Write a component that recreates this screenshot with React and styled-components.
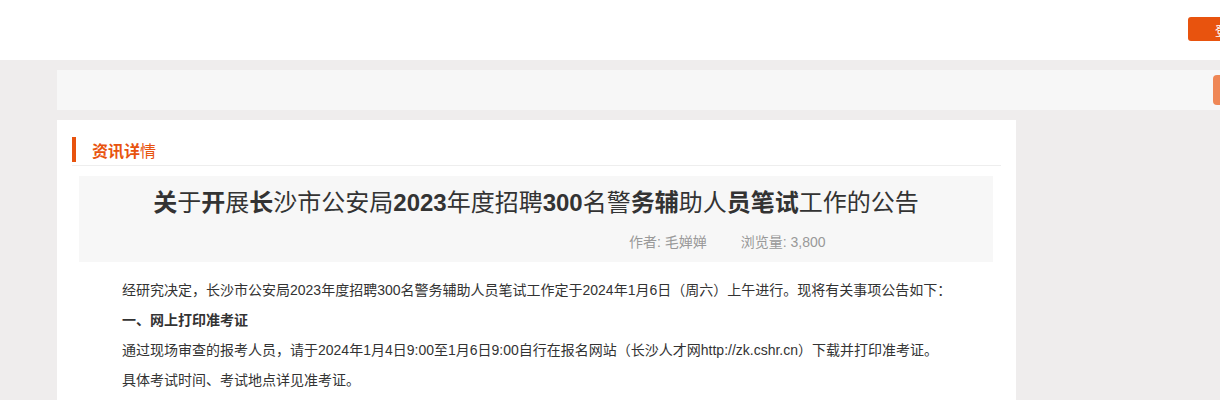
import styled, { createGlobalStyle } from 'styled-components';

const GlobalStyle = createGlobalStyle`
  html, body {
    margin: 0;
    padding: 0;
    overflow: hidden;
    background-color: #efeded;
  }
  body {
    font-family: 'Liberation Sans', 'Noto Sans CJK SC', sans-serif;
    color: #333333;
  }
  * {
    box-sizing: border-box;
  }
`;

const Page = styled.div`
  width: 1400px;
  min-height: 400px;
  background-color: #efeded;
`;

const Header = styled.div`
  height: 60px;
  background-color: #ffffff;
  display: flex;
  justify-content: flex-end;
  align-items: flex-start;
  padding: 17px 132px 0 0;
`;

const LoginButton = styled.button`
  width: 80px;
  height: 24px;
  border: none;
  border-radius: 3px;
  background-color: #e8530e;
  color: #ffffff;
  font-family: 'Liberation Sans', 'Noto Sans CJK SC', sans-serif;
  font-size: 13px;
  padding: 0;
  cursor: pointer;
`;

const Main = styled.div`
  padding: 10px 0 0 57px;
  display: flex;
  flex-direction: column;
  gap: 10px;
`;

const SearchBar = styled.div`
  width: 1250px;
  height: 40px;
  background-color: #f7f7f7;
  display: flex;
  align-items: center;
  padding-left: 1156px;
`;

const SearchButton = styled.div`
  width: 60px;
  height: 30px;
  border-radius: 4px;
  background-color: #ef8756;
`;

const Card = styled.div`
  width: 959px;
  min-height: 300px;
  background-color: #ffffff;
  padding-top: 17px;
`;

const SectionHead = styled.div`
  margin: 0 15px;
  display: flex;
  align-items: flex-start;
  height: 29px;
  border-bottom: 1px solid #eeeeee;
  h2 {
    margin: 0;
    height: 25px;
    display: flex;
    align-items: center;
    border-left: 4px solid #e8530e;
    padding-left: 16px;
    font-size: 16px;
    font-weight: normal;
    color: #e8530e;
    b {
      font-weight: bold;
    }
  }
`;

const TitleBox = styled.div`
  margin: 10px 23px 0 22px;
  height: 86px;
  background-color: #f7f7f7;
  padding-top: 12px;
  h1 {
    margin: 0;
    text-align: center;
    font-size: 24px;
    line-height: 30px;
    font-weight: normal;
    color: #333333;
    b {
      font-weight: bold;
    }
  }
`;

const Meta = styled.div`
  display: flex;
  gap: 34px;
  padding-left: 550px;
  margin-top: 14px;
  font-size: 14px;
  line-height: 20px;
  color: #999999;
`;

const Content = styled.div`
  padding: 13px 40px 0 65px;
  font-size: 14px;
  line-height: 30px;
  color: #333333;
  p {
    margin: 0;
  }
  strong {
    font-weight: bold;
  }
`;

export default function App() {
  return (
    <>
      <GlobalStyle />
      <Page>
        <Header>
          <LoginButton>登录</LoginButton>
        </Header>
        <Main>
          <SearchBar>
            <SearchButton />
          </SearchBar>
          <Card>
            <SectionHead>
              <h2>
                <b>资讯详</b>情
              </h2>
            </SectionHead>
            <TitleBox>
              <h1>
                <b>关</b>于<b>开</b>展<b>长</b>沙市公安局<b>2023</b>年度招聘<b>300</b>名警<b>务辅</b>助人<b>员笔试</b>工作的公告
              </h1>
              <Meta>
                <span>作者: 毛婵婵</span>
                <span>浏览量: 3,800</span>
              </Meta>
            </TitleBox>
            <Content>
              <p>经研究决定，长沙市公安局2023年度招聘300名警务辅助人员笔试工作定于2024年1月6日（周六）上午进行。现将有关事项公告如下：</p>
              <p>
                <strong>一、网上打印准考证</strong>
              </p>
              <p>通过现场审查的报考人员，请于2024年1月4日9:00至1月6日9:00自行在报名网站（长沙人才网http://zk.cshr.cn）下载并打印准考证。</p>
              <p>具体考试时间、考试地点详见准考证。</p>
            </Content>
          </Card>
        </Main>
      </Page>
    </>
  );
}
